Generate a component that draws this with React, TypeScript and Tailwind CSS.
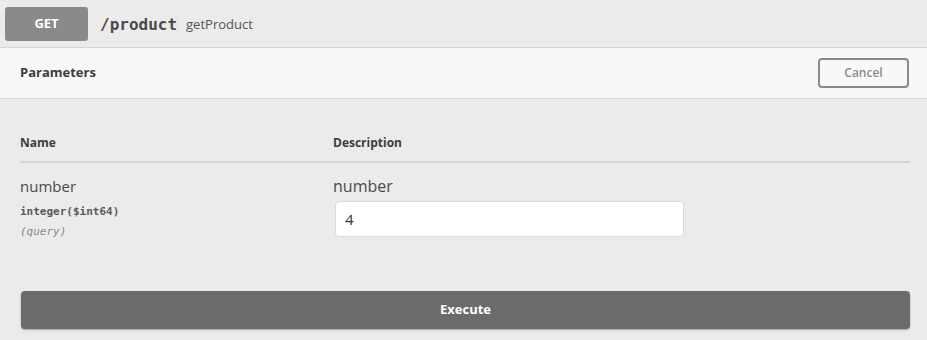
import React from "react";

const sans = "font-['Open_Sans','Liberation_Sans',sans-serif]";
const mono = "font-['DejaVu_Sans_Mono','Liberation_Mono',monospace]";

export default function App() {
    return (
        <div className={`w-[927px] h-[340px] bg-[#ebebeb] ${sans} text-[#3b4151]`}>
            <div className="h-[48px] flex items-center pl-[5px] pt-[1px] border-b border-[#d6d6d6]">
                <div className="w-[83px] h-[34px] rounded-[3px] bg-[#8a8a8a] flex items-center justify-center text-white text-[13px] font-bold">
                    GET
                </div>
                <span className={`${mono} ml-[12px] text-[16px] font-bold text-[#4a4a4a] pt-[2px]`}>/product</span>
                <span className="ml-[9px] text-[13px] text-[#555] pt-[2px]">getProduct</span>
            </div>

            <div className="h-[51px] bg-[#f8f8f8] flex items-center justify-between pl-[20px] pr-[18px] border-b border-[#d9d9d9]">
                <span className="text-[13px] font-bold text-[#3d3d3d]">Parameters</span>
                <button className="w-[91px] h-[30px] border-2 border-[#8a8a8a] rounded-[4px] text-[12px] font-semibold text-[#8a8a8a] bg-transparent">
                    Cancel
                </button>
            </div>

            <div className="pl-[20px] pr-[17px] pt-[35px]">
                <div className="flex border-b-2 border-[#d4d4d4] pb-[9px] text-[12px] font-bold text-[#3d3d3d]">
                    <div className="w-[313px]">Name</div>
                    <div>Description</div>
                </div>
                <div className="flex pt-[12px]">
                    <div className="w-[313px]">
                        <div className="text-[15px] text-[#4a4a4a] leading-[22px]">number</div>
                        <div className={`${mono} text-[11px] font-bold text-[#5a5a5a] mt-[7px]`}>integer($int64)</div>
                        <div className={`${mono} text-[11px] italic text-[#888] mt-[3px]`}>(query)</div>
                    </div>
                    <div>
                        <div className="text-[16px] text-[#4a4a4a] leading-[22px]">number</div>
                        <div className="mt-[4px] ml-[2px] w-[349px] h-[36px] bg-white border border-[#d9d9d9] rounded-[4px] flex items-center px-[9px] text-[15px] text-[#333]">
                            4
                        </div>
                    </div>
                </div>
                <div className="mt-[51px] ml-[1px] w-[889px] h-[38px] bg-[#6b6b6b] rounded-[4px] shadow-[0_1px_2px_rgba(0,0,0,0.3)] flex items-center justify-center text-white text-[13px] font-bold">
                    Execute
                </div>
            </div>
        </div>
    );
}
